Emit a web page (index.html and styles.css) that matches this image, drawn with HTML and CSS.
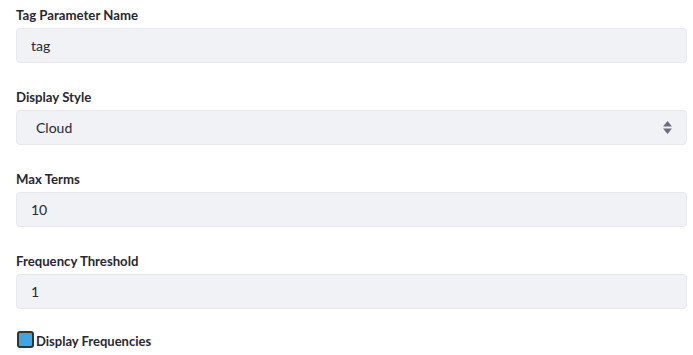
FILE: index.html
```html
<!DOCTYPE html>
<html>
<head>
<meta charset="utf-8">
<link rel="stylesheet" href="styles.css">
</head>
<body>
<form class="form">
  <div class="group">
    <label class="label">Tag Parameter Name</label>
    <div class="control">tag</div>
  </div>
  <div class="group">
    <label class="label">Display Style</label>
    <div class="control select">
      <span class="select-value">Cloud</span>
      <svg class="arrows" width="9" height="13" viewBox="0 0 9 13">
        <path d="M4.5 0 L9 5.5 H0 Z" fill="#6b6c7e"/>
        <path d="M0 7.5 H9 L4.5 13 Z" fill="#6b6c7e"/>
      </svg>
    </div>
  </div>
  <div class="group">
    <label class="label">Max Terms</label>
    <div class="control">10</div>
  </div>
  <div class="group">
    <label class="label">Frequency Threshold</label>
    <div class="control">1</div>
  </div>
  <div class="check-row">
    <span class="checkbox"></span>
    <span class="check-label">Display Frequencies</span>
  </div>
</form>
</body>
</html>
```
FILE: styles.css
```css
html, body {
  margin: 0;
  padding: 0;
  background: #ffffff;
}
body {
  font-family: "Lato", "Noto Sans", sans-serif;
  color: #272833;
}
.form {
  display: flex;
  flex-direction: column;
  padding: 6px 6px 0 16px;
}
.group {
  display: flex;
  flex-direction: column;
  margin-bottom: 25px;
}
.label {
  font-size: 13.2px;
  font-weight: 700;
  line-height: 18px;
  height: 18px;
  margin-bottom: 4px;
  color: #272833;
}
.control {
  box-sizing: border-box;
  height: 35px;
  background: #f1f2f5;
  border: 1px solid #e7e7ed;
  border-radius: 4px;
  padding: 0 14px;
  font-size: 14px;
  line-height: 33px;
  color: #272833;
}
.select {
  display: flex;
  align-items: center;
  justify-content: space-between;
  padding: 0 14px 0 19px;
}
.arrows {
  display: block;
}
.check-row {
  display: flex;
  align-items: flex-end;
  margin-top: -3px;
}
.checkbox {
  box-sizing: border-box;
  width: 17px;
  height: 17px;
  background: #3ea7e3;
  border: 2px solid #2f3439;
  border-radius: 3px;
  margin-left: 1px;
  margin-right: 2px;
}
.check-label {
  font-size: 13px;
  font-weight: 700;
  line-height: 14px;
}
```
